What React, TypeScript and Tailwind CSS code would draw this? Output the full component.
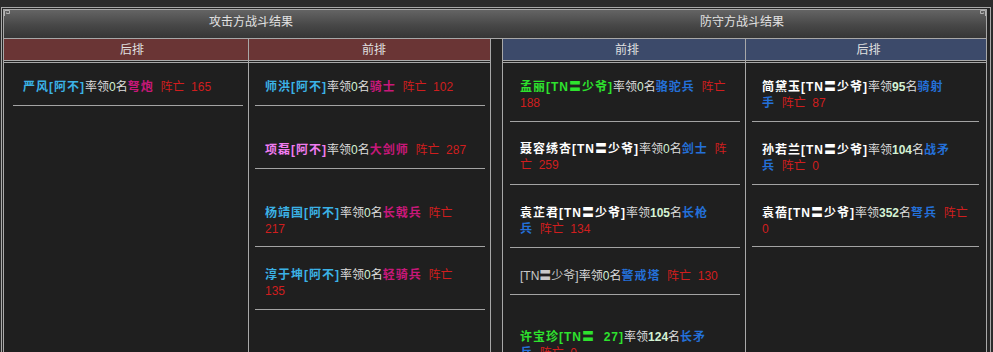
import React from 'react';

type Seg = { t: string; c: string };
type Entry = { pad: string; lines: Seg[][] };

const S = '\u00a0\u00a0';
const TAG = '[TN〓少爷]';

const cyan = 'text-[#3bb2e6] font-bold tracking-[1px]';
const pink = 'text-[#f07cf0] font-bold tracking-[1px]';
const green = 'text-[#2ee22e] font-bold tracking-[1px]';
const white = 'text-white font-bold tracking-[1px]';
const gray = 'text-[#c8c8c8]';
const plain = 'text-[#dcdcdc]';
const num = 'text-[#d4f2d4]';
const numB = 'text-[#d4f2d4] font-bold';
const mag = 'text-[#c8187a] font-bold tracking-[1px]';
const blue = 'text-[#2470d8] font-bold tracking-[1px]';
const red = 'text-[#d01e1e]';

const lead = (name: string, cls: string, n: string, bold = false): Seg[] => [
    { t: name, c: cls },
    { t: '率领', c: plain },
    { t: n, c: bold ? numB : num },
    { t: '名', c: plain },
];

const col1: Entry[] = [
    {
        pad: 'pt-[16px] pb-[10px]',
        lines: [[...lead('严风[阿不]', cyan, '0'), { t: '弩炮', c: mag }, { t: `${S}阵亡${S}165`, c: red }]],
    },
];

const col2: Entry[] = [
    {
        pad: 'pt-[16px] pb-[10px]',
        lines: [[...lead('师洪[阿不]', cyan, '0'), { t: '骑士', c: mag }, { t: `${S}阵亡${S}102`, c: red }]],
    },
    {
        pad: 'pt-[36px] pb-[10px]',
        lines: [[...lead('项磊[阿不]', pink, '0'), { t: '大剑师', c: mag }, { t: `${S}阵亡${S}287`, c: red }]],
    },
    {
        pad: 'pt-[36px] pb-[9px]',
        lines: [
            [...lead('杨靖国[阿不]', cyan, '0'), { t: '长戟兵', c: mag }, { t: `${S}阵亡`, c: red }],
            [{ t: '217', c: red }],
        ],
    },
    {
        pad: 'pt-[20px] pb-[10px]',
        lines: [
            [...lead('淳于坤[阿不]', cyan, '0'), { t: '轻骑兵', c: mag }, { t: `${S}阵亡`, c: red }],
            [{ t: '135', c: red }],
        ],
    },
];

const col3: Entry[] = [
    {
        pad: 'pt-[16px] pb-[10px]',
        lines: [
            [...lead('孟丽' + TAG, green, '0'), { t: '骆驼兵', c: blue }, { t: `${S}阵亡`, c: red }],
            [{ t: '188', c: red }],
        ],
    },
    {
        pad: 'pt-[19px] pb-[11px]',
        lines: [
            [...lead('聂容绣杏' + TAG, white, '0'), { t: '剑士', c: blue }, { t: `${S}阵`, c: red }],
            [{ t: `亡${S}259`, c: red }],
        ],
    },
    {
        pad: 'pt-[20px] pb-[10px]',
        lines: [
            [...lead('袁芷君' + TAG, white, '105', true), { t: '长枪', c: blue }],
            [{ t: '兵', c: blue }, { t: `${S}阵亡${S}134`, c: red }],
        ],
    },
    {
        pad: 'pt-[20px] pb-[10px]',
        lines: [[...lead(TAG, gray, '0'), { t: '警戒塔', c: blue }, { t: `${S}阵亡${S}130`, c: red }]],
    },
    {
        pad: 'pt-[34px] pb-[10px]',
        lines: [
            [...lead(`许宝珍[TN〓${S}27]`, green, '124', true), { t: '长矛', c: blue }],
            [{ t: '兵', c: blue }, { t: `${S}阵亡${S}0`, c: red }],
        ],
    },
];

const col4: Entry[] = [
    {
        pad: 'pt-[16px] pb-[10px]',
        lines: [
            [...lead('简黛玉' + TAG, white, '95', true), { t: '骑射', c: blue }],
            [{ t: '手', c: blue }, { t: `${S}阵亡${S}87`, c: red }],
        ],
    },
    {
        pad: 'pt-[20px] pb-[10px]',
        lines: [
            [...lead('孙若兰' + TAG, white, '104', true), { t: '战矛', c: blue }],
            [{ t: '兵', c: blue }, { t: `${S}阵亡${S}0`, c: red }],
        ],
    },
    {
        pad: 'pt-[20px] pb-[9px]',
        lines: [
            [...lead('袁蓓' + TAG, white, '352', true), { t: '弩兵', c: blue }, { t: `${S}阵亡`, c: red }],
            [{ t: '0', c: red }],
        ],
    },
];

function Corner({ flip = false }: { flip?: boolean }) {
    return (
        <svg
            width="6"
            height="6"
            viewBox="0 0 6 6"
            className={flip ? 'absolute right-[0px] top-[0px] -scale-x-100' : 'absolute left-[0px] top-[0px]'}
        >
            <path d="M0.5 6 V0.5 H5.5 V3.5 H2.5 V2.5" fill="none" stroke="#b4b4b4" strokeWidth="1" />
        </svg>
    );
}

function Column({
    title,
    head,
    entries,
    box,
    inset,
}: {
    title: string;
    head: string;
    entries: Entry[];
    box: string;
    inset: string;
}) {
    return (
        <div className={`flex flex-col border-[#a8a8a8] ${box}`}>
            <div className={`h-[22px] border-b border-[#a8a8a8] pt-[2px] text-center leading-[19px] text-[#e0e0e0] ${head}`}>
                {title}
            </div>
            <div className="mt-[1px] flex-1 border-t border-[#a8a8a8] bg-[#1f1f1f]">
                {entries.map((e, i) => (
                    <div key={i} className={`border-b border-[#a3a3a3] pl-[10px] leading-[16px] ${inset} ${e.pad}`}>
                        {e.lines.map((line, j) => (
                            <div key={j} className="whitespace-nowrap">
                                {line.map((s, k) => (
                                    <span key={k} className={s.c}>
                                        {s.t}
                                    </span>
                                ))}
                            </div>
                        ))}
                    </div>
                ))}
            </div>
        </div>
    );
}

export default function App() {
    return (
        <div
            className="h-[352px] w-[993px] overflow-hidden bg-[#2b2b2b] pt-[7px] text-[12px]"
            style={{ fontFamily: '"Liberation Sans", "Noto Sans CJK SC", sans-serif' }}
        >
            <div className="ml-[1px] h-[400px] w-[990px] border-l border-r border-t border-[#a8a8a8] bg-[#262626] pl-[1px] pr-[3px] pt-[1px]">
                <div className="flex h-full flex-col border-l border-r border-t border-[#a8a8a8] bg-[#1f1f1f]">
                    <div className="relative flex h-[29px] border-b border-[#a8a8a8] bg-[linear-gradient(to_bottom,#646464,#474747_55%,#363636)] leading-[24px] text-[#e2e2e2]">
                        <Corner />
                        <Corner flip />
                        <div className="w-[494px] text-center">攻击方战斗结果</div>
                        <div className="flex-1 text-center">防守方战斗结果</div>
                    </div>
                    <div className="flex flex-1">
                        <Column
                            title="后排"
                            head="bg-[#6a3535] pl-[12px]"
                            entries={col1}
                            box="w-[245px] border-r"
                            inset="ml-[9px] mr-[5px]"
                        />
                        <Column
                            title="前排"
                            head="bg-[#6a3535] pl-[9px]"
                            entries={col2}
                            box="w-[242px] border-r"
                            inset="ml-[6px] mr-[5px]"
                        />
                        <div className="w-[11px] bg-[#242424]" />
                        <Column
                            title="前排"
                            head="bg-[#3c4a6a] pl-[6px]"
                            entries={col3}
                            box="w-[244px] border-l border-r"
                            inset="ml-[7px] mr-[5px]"
                        />
                        <Column
                            title="后排"
                            head="bg-[#3c4a6a] pl-[5px]"
                            entries={col4}
                            box="flex-1"
                            inset="ml-[6px] mr-[7px]"
                        />
                    </div>
                </div>
            </div>
        </div>
    );
}
